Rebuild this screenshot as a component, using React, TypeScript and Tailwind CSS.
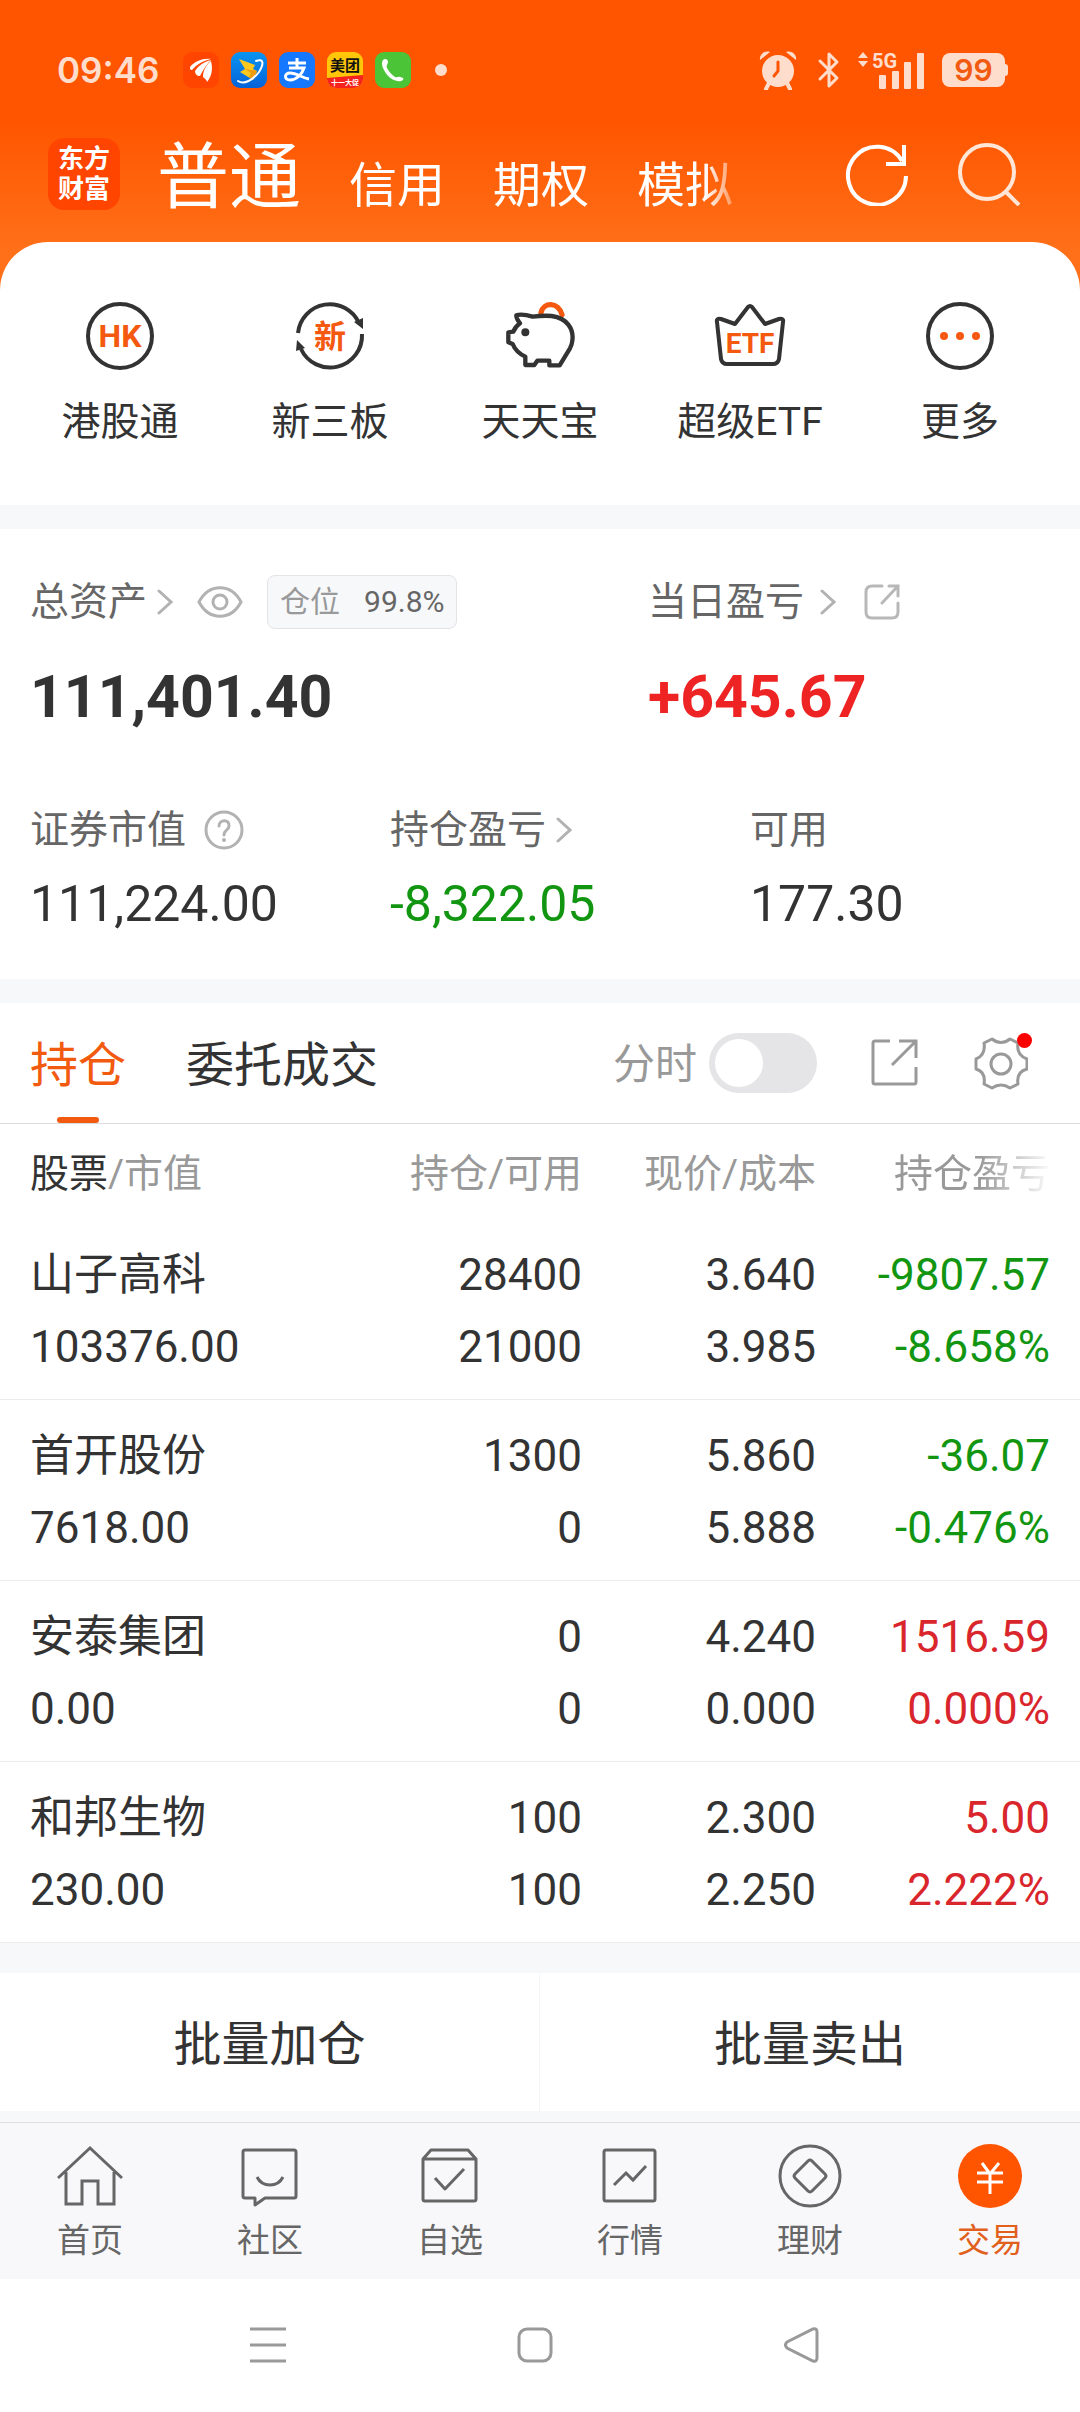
/**
 * App.tsx
 *
 * Mobile brokerage trade screen: account tabs, quick entries,
 * asset summary, holdings table and the bottom tab bar.
 */

import type { ReactNode } from 'react'

type Tone = 'up' | 'down'

interface Holding {
  readonly name: string
  readonly value: string
  readonly amount: string
  readonly available: string
  readonly price: string
  readonly cost: string
  readonly profit: string
  readonly ratio: string
  readonly tone: Tone
}

interface IconItem {
  readonly label: string
  readonly icon: ReactNode
}

const HOLDINGS: Holding[] = [
  { name: '山子高科', value: '103376.00', amount: '28400', available: '21000', price: '3.640', cost: '3.985', profit: '-9807.57', ratio: '-8.658%', tone: 'down' },
  { name: '首开股份', value: '7618.00', amount: '1300', available: '0', price: '5.860', cost: '5.888', profit: '-36.07', ratio: '-0.476%', tone: 'down' },
  { name: '安泰集团', value: '0.00', amount: '0', available: '0', price: '4.240', cost: '0.000', profit: '1516.59', ratio: '0.000%', tone: 'up' },
  { name: '和邦生物', value: '230.00', amount: '100', available: '100', price: '2.300', cost: '2.250', profit: '5.00', ratio: '2.222%', tone: 'up' },
]

const TONE_STYLES: Record<Tone, string> = {
  up: 'text-[#d9262c]',
  down: 'text-[#129612]',
}

/* ---------- status bar ---------- */

function AppBadges() {
  return (
    <div className="flex items-center gap-3">
      <svg className="size-9" viewBox="0 0 36 36">
        <rect width="36" height="36" rx="9" fill="#ff4500" />
        <path d="M7 15C12 9 20 6 28 7C20 9 14 12 9 18C7 18 7 17 7 15Z" fill="#fff" />
        <path d="M12 19C16 13 21 10 28 8C23 13 20 18 17 24C14 24 12 22 12 19Z" fill="#fff" />
        <path d="M20 25C20 19 23 13 28 9C30 17 29 24 24 30C24 28 22 27 20 25Z" fill="#fff" />
      </svg>
      <svg className="size-9" viewBox="0 0 36 36">
        <defs>
          <linearGradient id="blue" x1="0" y1="0" x2="0" y2="1">
            <stop offset="0" stopColor="#0a94f0" />
            <stop offset="1" stopColor="#0562d8" />
          </linearGradient>
        </defs>
        <rect width="36" height="36" rx="9" fill="url(#blue)" />
        <path d="M8 7L24 13L22 17L26 19L22 28L9 20L14 17Z" fill="#ffc81e" />
        <path d="M14 17L26 19L22 28L18 25L20 21Z" fill="#f09a10" />
        <path d="M25 9C33 6 33 12 28 20C22 28 13 33 7 29" fill="none" stroke="#fff" strokeWidth="2" strokeLinecap="round" />
      </svg>
      <svg className="size-9" viewBox="0 0 36 36">
        <rect width="36" height="36" rx="9" fill="#1677ff" />
        <path
          d="M9 11H27M18 6V16M10 16H25C23 22 18 28 11 28C5 28 5 21 11 21C18 21 23 26 30 27"
          fill="none"
          stroke="#fff"
          strokeWidth="3"
        />
      </svg>
      <svg className="size-9" viewBox="0 0 36 36">
        <defs>
          <clipPath id="badge">
            <rect width="36" height="36" rx="9" />
          </clipPath>
        </defs>
        <g clipPath="url(#badge)">
          <rect width="36" height="36" fill="#ffc60a" />
          <path d="M0 26L36 23V36H0Z" fill="#f5221e" />
          <text x="18" y="19" textAnchor="middle" fontSize="15" fontWeight="700" fill="#111">
            美团
          </text>
          <text x="18" y="33" textAnchor="middle" fontSize="7" fontWeight="700" fill="#fff">
            十一大促
          </text>
        </g>
      </svg>
      <svg className="size-9" viewBox="0 0 36 36">
        <rect width="36" height="36" rx="9" fill="#4cc438" />
        <path
          d="M8 8C10 6 13 7 13 10C13 12 11 13 12 16C14 20 17 23 20 25C22 26 23 24 25 25C28 26 29 26 28 28C24 31 17 28 13 24C9 19 5 12 8 8Z"
          fill="#fff"
        />
      </svg>
      <span className="ml-3 size-3 rounded-full bg-[#ffddcc]" />
    </div>
  )
}

function StatusBar() {
  return (
    <div className="flex h-9 items-center justify-between pr-[72px] pl-[57px] text-[#ffddcc]">
      <div className="flex items-center gap-6">
        <time className="font-[Inter] text-[35px] leading-9 font-semibold">09:46</time>
        <AppBadges />
      </div>
      <div className="flex items-center">
        <svg className="h-10 w-[38px]" viewBox="0 0 38 40" fill="currentColor">
          <circle cx="19" cy="21" r="16" />
          <path d="M1 10C0 5 5 0 11 2Z" />
          <path d="M37 10C38 5 33 0 27 2Z" />
          <path d="M10 33L7 39M28 33L31 39" stroke="currentColor" strokeWidth="4" strokeLinecap="round" />
          <path d="M19 12V21L15 26" fill="none" stroke="#ff5500" strokeWidth="3" strokeLinecap="round" strokeLinejoin="round" />
        </svg>
        <svg className="ml-5 h-10 w-6" viewBox="0 0 24 40" fill="none" stroke="currentColor" strokeWidth="3" strokeLinecap="round" strokeLinejoin="round">
          <path d="M3 11L20 28L12 36V4L20 12L3 29" />
        </svg>
        <svg className="ml-[17px] h-10 w-[68px] overflow-visible" viewBox="0 0 68 40" fill="currentColor">
          <path d="M5 2L10 8H0ZM0 11H10L5 17Z" />
          <text x="14" y="18" fontSize="20" fontWeight="700" fontFamily="Roboto">
            5G
          </text>
          <rect x="21" y="25" width="7" height="14" rx="1" />
          <rect x="34" y="21" width="7" height="18" rx="1" />
          <rect x="46" y="12" width="7" height="27" rx="1" />
          <rect x="59" y="3" width="7" height="36" rx="1" />
        </svg>
        <span className="ml-4 flex h-[34px] w-[63px] items-center justify-center rounded-lg bg-[#ffddcc] font-[Inter] text-[30px] leading-none font-semibold text-[#f25a10]">
          99
        </span>
        <span className="h-3 w-[3px] rounded-r-sm bg-[#ffddcc]" />
      </div>
    </div>
  )
}

/* ---------- header ---------- */

function Header() {
  return (
    <header className="flex h-[72px] items-center pr-[59px] pl-12 text-white">
      <div className="flex size-[72px] flex-col items-center justify-center rounded-2xl bg-[#ff4500] text-[26px] leading-[30px] font-bold">
        <span>东方</span>
        <span>财富</span>
      </div>
      <nav className="ml-[37px] flex items-baseline gap-12 pt-4 text-[48px] leading-[72px] whitespace-nowrap [mask-image:linear-gradient(to_right,#000_calc(100%-28px),transparent_calc(100%+14px))]">
        <a href="#normal" className="text-[72px]">普通</a>
        <a href="#credit">信用</a>
        <a href="#option">期权</a>
        <a href="#mock">模拟</a>
      </nav>
      <div className="ml-auto flex items-center gap-[48px]">
        <button type="button" aria-label="刷新">
          <svg className="size-16" viewBox="0 0 64 64" fill="none" stroke="currentColor" strokeWidth="4">
            <path d="M61 34A29 29 0 1 1 57 19" />
            <path d="M59 3V22H41" />
          </svg>
        </button>
        <button type="button" aria-label="搜索">
          <svg className="size-16 text-[#ffe6d6]" viewBox="0 0 64 64" fill="none" stroke="currentColor" strokeWidth="4">
            <circle cx="30" cy="30" r="27" />
            <path d="M49 50L62 63" />
          </svg>
        </button>
      </div>
    </header>
  )
}

/* ---------- quick entries ---------- */

const QUICK_ITEMS: IconItem[] = [
  {
    label: '港股通',
    icon: (
      <>
        <circle cx="36" cy="36" r="32" />
        <text x="36" y="47" textAnchor="middle" fontSize="32" fontWeight="700" fontFamily="Roboto" fill="#f5590f" stroke="none">
          HK
        </text>
      </>
    ),
  },
  {
    label: '新三板',
    icon: (
      <>
        <path d="M4 33A32 32 0 0 1 65 23M68 34A32 32 0 0 1 7 49" />
        <path d="M69 18L60 22L69 29ZM3 40L11 48L2 51Z" fill="#333" stroke="none" />
        <text x="36" y="48" textAnchor="middle" fontSize="32" fontWeight="700" fill="#f5590f" stroke="none">
          新
        </text>
      </>
    ),
  },
  {
    label: '天天宝',
    icon: (
      <g transform="translate(-24 -10) scale(0.3333)" strokeWidth="13">
        <path d="M183 68C190 36 235 34 246 74" stroke="#f5590f" strokeWidth="16" strokeLinecap="round" />
        <path
          d="M85 127L100 125Q106 110 120 100Q108 84 109 76Q125 70 158 80Q190 76 215 78C262 84 282 118 277 152Q276 164 270 175L239 226H208V212H172L163 225H136V200Q108 187 98 162L85 157Z"
          strokeLinejoin="round"
        />
        <circle cx="136" cy="127" r="12" fill="#333" stroke="none" />
      </g>
    ),
  },
  {
    label: '超级ETF',
    icon: (
      <>
        <path
          d="M3 22Q2 18 7 19L21 24L34 7Q36 5 38 7L51 24L65 19Q70 18 69 22L65 59Q64 64 59 64H13Q8 64 7 59Z"
          strokeLinejoin="round"
        />
        <text x="36" y="53" textAnchor="middle" fontSize="28" fontWeight="700" fontFamily="Roboto" fill="#f5590f" stroke="none">
          ETF
        </text>
      </>
    ),
  },
  {
    label: '更多',
    icon: (
      <>
        <circle cx="36" cy="36" r="32" />
        <g fill="#f5590f" stroke="none">
          <circle cx="20" cy="36" r="4" />
          <circle cx="36" cy="36" r="4" />
          <circle cx="52" cy="36" r="4" />
        </g>
      </>
    ),
  },
]

function QuickEntries() {
  return (
    <section className="grid h-[263px] grid-cols-5 rounded-t-[48px] bg-white px-[15px] pt-[58px]">
      {QUICK_ITEMS.map((item) => (
        <a key={item.label} href="#entry" className="flex flex-col items-center text-[39px] leading-[48px]">
          <svg className="size-[72px]" viewBox="0 0 72 72" fill="none" stroke="#333" strokeWidth="4">
            {item.icon}
          </svg>
          <span className="mt-[26px]">{item.label}</span>
        </a>
      ))}
    </section>
  )
}

/* ---------- assets ---------- */

function Chevron() {
  return (
    <svg className="h-7 w-4 shrink-0" viewBox="0 0 16 28" fill="none" stroke="#b2b2b2" strokeWidth="3" strokeLinecap="round">
      <path d="M2 3L14 14L2 25" />
    </svg>
  )
}

function AssetSummary() {
  return (
    <section className="px-[30px] pt-[46px] pb-[42px]">
      <div className="grid grid-cols-[618px_1fr]">
        <div>
          <div className="flex h-[54px] items-center text-[39px] leading-[54px] text-[#666]">
            <span className="mr-2.5">总资产</span>
            <Chevron />
            <button type="button" aria-label="隐藏金额" className="ml-6">
              <svg className="h-8 w-[46px]" viewBox="0 0 46 32" fill="none" stroke="#b2b2b2" strokeWidth="3">
                <path d="M2 16C12 -3 34 -3 44 16C34 35 12 35 2 16Z" />
                <circle cx="23" cy="16" r="7" />
              </svg>
            </button>
            <div className="ml-6 flex h-[54px] items-center rounded-lg border border-[#e4e4e6] bg-[#f7f8fa] px-3 text-[30px]">
              <span className="text-[#999]">仓位</span>
              <span className="ml-6">99.8%</span>
            </div>
          </div>
          <p className="mt-7 text-[59px] leading-[80px] font-bold">111,401.40</p>
        </div>
        <div>
          <div className="flex h-[54px] items-center text-[39px] leading-[54px] text-[#666]">
            <span className="mr-4">当日盈亏</span>
            <Chevron />
            <button type="button" aria-label="分享" className="ml-7">
              <svg className="size-9" viewBox="0 0 36 36" fill="none" stroke="#b8b8b8" strokeWidth="3" strokeLinecap="round">
                <path d="M18 2H8Q2 2 2 8V28Q2 34 8 34H28Q34 34 34 28V19M25 2H34V12M34 2L18 19" />
              </svg>
            </button>
          </div>
          <p className="mt-7 text-[59px] leading-[80px] font-bold text-[#ee2424]">+645.67</p>
        </div>
      </div>
      <div className="mt-[66px] grid grid-cols-[360px_360px_1fr]">
        <div>
          <div className="flex items-center text-[39px] leading-[54px] text-[#666]">
            <span className="mr-[18px]">证券市值</span>
            <svg className="size-10" viewBox="0 0 40 40" fill="none" stroke="#b2b2b2" strokeWidth="3">
              <circle cx="20" cy="20" r="18" />
              <path d="M15 16C15 9 26 9 25 16C25 20 20 20 20 25" strokeLinecap="round" />
              <circle cx="20" cy="30" r="2" fill="#b2b2b2" stroke="none" />
            </svg>
          </div>
          <p className="mt-[14px] text-[50px] leading-[66px]">111,224.00</p>
        </div>
        <div>
          <div className="flex items-center text-[39px] leading-[54px] text-[#666]">
            <span className="mr-2.5">持仓盈亏</span>
            <Chevron />
          </div>
          <p className="mt-[14px] text-[50px] leading-[66px] text-[#129612]">-8,322.05</p>
        </div>
        <div>
          <div className="text-[39px] leading-[54px] text-[#666]">可用</div>
          <p className="mt-[14px] text-[50px] leading-[66px]">177.30</p>
        </div>
      </div>
    </section>
  )
}

/* ---------- holdings ---------- */

function HoldingTabs() {
  return (
    <div className="flex h-[121px] items-center border-b border-[#dcdcdc] pr-[52px] pl-[30px]">
      <div className="flex gap-[60px] self-stretch text-[48px]">
        <button type="button" className="relative pt-1.5 text-[#f25a10]">
          持仓
          <span className="absolute bottom-0 left-1/2 h-1.5 w-[42px] -translate-x-1/2 rounded-full bg-[#f25a10]" />
        </button>
        <button type="button" className="pt-1.5">委托成交</button>
      </div>
      <label htmlFor="minute" className="ml-auto pt-1 text-[42px] leading-[60px] text-[#999]">分时</label>
      <input
        id="minute"
        type="checkbox"
        role="switch"
        className="ml-3 flex h-[60px] w-[108px] appearance-none items-center rounded-full bg-[#e5e5e7] px-1.5 before:size-12 before:rounded-full before:bg-white checked:justify-end checked:bg-[#f25a10]"
      />
      <button type="button" aria-label="分享持仓" className="ml-[54px]">
        <svg className="size-12" viewBox="0 0 48 48" fill="none" stroke="#999" strokeWidth="3">
          <path d="M19 2H4Q2 2 2 4V43Q2 45 4 45H43Q45 45 45 43V28M28 2H45V19M45 2L21 26" />
        </svg>
      </button>
      <button type="button" aria-label="设置" className="relative ml-[55px]">
        <svg className="h-[53px] w-[54px]" viewBox="0 0 54 53" fill="none" stroke="#999" strokeWidth="3" strokeLinejoin="round">
          <path d="M18 2Q27 9 36 2L44 6Q42 18 53 22V32Q42 35 44 47L36 51Q27 45 18 51L10 47Q12 35 2 32V22Q12 18 10 6Z" />
          <circle cx="27" cy="27" r="10" />
        </svg>
        <span className="absolute -top-1 -right-1 size-[15px] rounded-full bg-[#ff0000]" />
      </button>
    </div>
  )
}

function HoldingTable() {
  return (
    <table className="w-full table-fixed text-right">
      <thead>
        <tr className="h-[95px] text-[39px] leading-[54px] text-[#999]">
          <th className="pt-1 pl-[30px] text-left font-normal">
            <span className="text-[#333]">股票</span>/市值
          </th>
          <th className="w-[256px] pt-1 font-normal">持仓/可用</th>
          <th className="w-[234px] pt-1 font-normal">现价/成本</th>
          <th className="w-[264px] pt-1 pr-[30px] font-normal">
            <span className="[mask-image:linear-gradient(to_right,#000_55%,transparent_102%)]">持仓盈亏</span>
          </th>
        </tr>
      </thead>
      <tbody>
        {HOLDINGS.map((row) => (
          <tr key={row.name} className="border-b border-[#ececec] text-[44px] leading-[72px]">
            <td className="pt-5 pb-4 pl-[30px] text-left">
              <div>{row.name}</div>
              <div>{row.value}</div>
            </td>
            <td className="pt-5 pb-4">
              <div>{row.amount}</div>
              <div>{row.available}</div>
            </td>
            <td className="pt-5 pb-4">
              <div>{row.price}</div>
              <div>{row.cost}</div>
            </td>
            <td className={`pt-5 pr-[30px] pb-4 ${TONE_STYLES[row.tone]}`}>
              <div>{row.profit}</div>
              <div>{row.ratio}</div>
            </td>
          </tr>
        ))}
      </tbody>
    </table>
  )
}

/* ---------- bottom bars ---------- */

const TAB_ITEMS: IconItem[] = [
  {
    label: '首页',
    icon: <path d="M1 35L33 5L65 35M9 29V61H25V38H41V61H57V29" />,
  },
  {
    label: '社区',
    icon: (
      <path d="M8 7H57Q59 7 59 9V53Q59 55 57 55H28L18 62V55H8Q6 55 6 53V9Q6 7 8 7ZM20 34Q24 42 33 42Q42 42 46 34" strokeLinejoin="round" />
    ),
  },
  {
    label: '自选',
    icon: (
      <path d="M6 16L14 7H51L59 16V56Q59 58 57 58H8Q6 58 6 56ZM6 16H59M18 35L28 46L47 26" strokeLinejoin="round" />
    ),
  },
  {
    label: '行情',
    icon: (
      <>
        <rect x="7" y="7" width="51" height="51" rx="2" />
        <path d="M17 42L29 30L36 37L49 23" />
      </>
    ),
  },
  {
    label: '理财',
    icon: (
      <>
        <circle cx="33" cy="33" r="30" />
        <path d="M31 18Q33 16 35 18L48 31Q50 33 48 35L35 48Q33 50 31 48L18 35Q16 33 18 31Z" />
      </>
    ),
  },
  {
    label: '交易',
    icon: (
      <>
        <circle cx="33" cy="33" r="32" fill="#ff5500" stroke="none" />
        <path d="M25 20L33 31L42 20M20 30H46M20 39H46M33 31V51" stroke="#fff" />
      </>
    ),
  },
]

function TabBar() {
  return (
    <nav className="grid h-[157px] grid-cols-6 border-t border-[#e0e0e2] bg-[#f8f8fa] pt-5">
      {TAB_ITEMS.map((item) => (
        <a
          key={item.label}
          href="#tab"
          className={`flex flex-col items-center text-[33px] leading-10 ${item.label === '交易' ? 'text-[#e0601c]' : 'text-[#666]'}`}
        >
          <svg className="size-[66px]" viewBox="0 0 66 66" fill="none" stroke="#666" strokeWidth="3">
            {item.icon}
          </svg>
          <span className="mt-3">{item.label}</span>
        </a>
      ))}
    </nav>
  )
}

function SystemNav() {
  return (
    <div className="flex h-[132px] items-center justify-between pr-[260px] pl-[250px] text-[#999]">
      <button type="button" aria-label="最近任务">
        <svg className="size-9" viewBox="0 0 36 36" stroke="currentColor" strokeWidth="3">
          <path d="M0 2H36M0 18H36M0 34H36" />
        </svg>
      </button>
      <button type="button" aria-label="主屏幕">
        <svg className="size-9" viewBox="0 0 36 36" fill="none" stroke="currentColor" strokeWidth="3">
          <rect x="2" y="2" width="32" height="32" rx="8" />
        </svg>
      </button>
      <button type="button" aria-label="返回">
        <svg className="size-9" viewBox="0 0 36 36" fill="none" stroke="currentColor" strokeWidth="3">
          <path d="M3 15L29 2Q33 1 33 5V31Q33 35 29 34L3 21Q0 18 3 15Z" />
        </svg>
      </button>
    </div>
  )
}

export default function App() {
  return (
    <div className="min-h-screen bg-white font-[Roboto,'Noto_Sans_CJK_SC',sans-serif] text-[#333]">
      <div className="bg-[linear-gradient(#ff5500_120px,#ff7018_250px)] pt-[52px]">
        <StatusBar />
        <div className="pt-[50px] pb-8">
          <Header />
        </div>
        <QuickEntries />
      </div>
      <div className="h-6 bg-[#f7f8fa]" />
      <AssetSummary />
      <div className="h-6 bg-[#f7f8fa]" />
      <HoldingTabs />
      <HoldingTable />
      <div className="h-[30px] bg-[#f6f8fa]" />
      <div className="grid grid-cols-2 divide-x divide-[#f4f5f7] text-[48px] leading-[132px]">
        <button type="button" className="pt-1.5">批量加仓</button>
        <button type="button" className="pt-1.5">批量卖出</button>
      </div>
      <div className="h-[11px] bg-[#f6f8fa]" />
      <TabBar />
      <SystemNav />
    </div>
  )
}
